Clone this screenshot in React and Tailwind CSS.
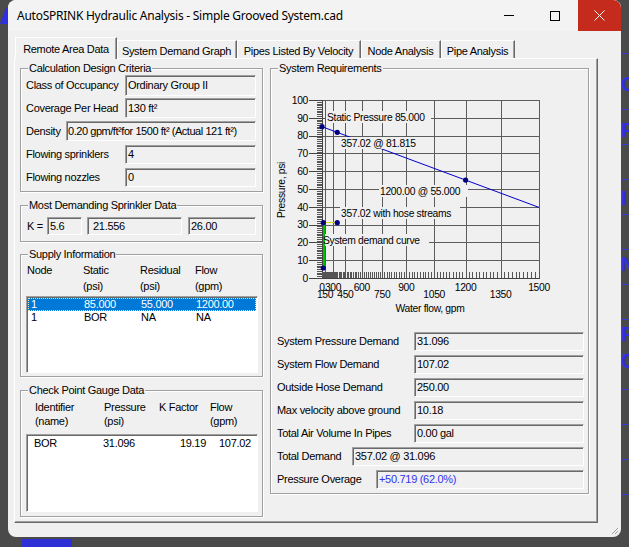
import React from "react";

const X = (q) => 322 + 217 * Math.pow(q / 1500, 1.85);
const Y = (p) => 278 - p * 1.78;
const c = (v) => Math.round(v) + 0.5;

function Group({ title, className, children }) {
  return (
    <div className={`relative border border-[#a0a0a0] shadow-[inset_1px_1px_0_#fff,1px_1px_0_#fff] ${className}`}>
      <span className="absolute left-[7px] top-[-7px] bg-[#f0f0f0] px-[1px] leading-[13px]">{title}</span>
      {children}
    </div>
  );
}

function Field({ className, children }) {
  return (
    <div
      className={`border border-t-[#a0a0a0] border-l-[#a0a0a0] border-r-white border-b-white shadow-[inset_1px_1px_0_#696969] bg-[#f0f0f0] whitespace-nowrap overflow-hidden ${className}`}
    >
      {children}
    </div>
  );
}

function Tab({ label, active, className }) {
  if (active) {
    return (
      <div className={`relative z-10 -mb-px flex h-[22px] items-start justify-center border-t border-l border-t-white border-l-white border-r border-r-[#696969] bg-[#f0f0f0] pt-[3px] shadow-[inset_-1px_0_0_#a0a0a0] ${className}`}>
        {label}
      </div>
    );
  }
  return (
    <div className={`flex h-[18px] items-start justify-center border-t border-t-white border-r border-r-[#696969] bg-[#f0f0f0] pt-[2px] shadow-[inset_-1px_0_0_#a0a0a0,inset_1px_0_0_#fff] ${className}`}>
      {label}
    </div>
  );
}

function Chart() {
  const grid = "#5c5c5c";
  const hl = [];
  for (let p = 10; p <= 100; p += 10) hl.push(p);
  const vl = [];
  for (let q = 150; q <= 1500; q += 150) vl.push(q);
  const minorY = [];
  for (let p = 0; p <= 100; p += 1) minorY.push(p);
  const minorX = [];
  for (let q = 0; q <= 1500; q += 15) minorX.push(q);
  const labels = [
    { t: "Static Pressure 85.000", x: 327, y: 121, rx: 326, ry: 111, w: 105 },
    { t: "357.02 @ 81.815", x: 341, y: 147, rx: 340, ry: 137, w: 84 },
    { t: "1200.00 @ 55.000", x: 380, y: 195, rx: 379, ry: 185, w: 89 },
    { t: "357.02 with hose streams", x: 341, y: 217, rx: 340, ry: 207, w: 120 },
    { t: "System demand curve", x: 323, y: 244, rx: 325, ry: 234, w: 104 },
  ];
  const pts = [
    [X(0), Y(85)],
    [X(357.02), Y(81.815)],
    [X(1200), Y(55)],
    [323.3, 268],
    [323.3, Y(31.096)],
    [X(357.02), Y(31.096)],
  ];
  return (
    <svg width="316" height="241" className="block font-['Liberation_Sans',Arial,sans-serif]">
      <g transform="translate(-271 -85)" shapeRendering="crispEdges">
        {hl.map((p) => (
          <line key={"h" + p} x1={322} x2={539} y1={c(Y(p))} y2={c(Y(p))} stroke={grid} />
        ))}
        {vl.map((q) => (
          <line key={"v" + q} x1={c(X(q))} x2={c(X(q))} y1={100} y2={278} stroke={grid} />
        ))}
        <line x1={322.5} x2={322.5} y1={100} y2={279} stroke="#444" />
        <line x1={322} x2={540} y1={278.5} y2={278.5} stroke="#444" />
        {minorY.map((p) => (
          <line key={"my" + p} x1={317} x2={322} y1={c(Y(p))} y2={c(Y(p))} stroke="#555" />
        ))}
        {hl.concat([0]).map((p) => (
          <line key={"My" + p} x1={309} x2={322} y1={c(Y(p))} y2={c(Y(p))} stroke="#444" />
        ))}
        {minorX.map((q) => (
          <line key={"mx" + q} x1={c(X(q))} x2={c(X(q))} y1={272} y2={278} stroke="#555" />
        ))}
        <rect x={323} y={223} width={2} height={45} fill="#00c000" />
        <rect x={324} y={222} width={14} height={1} fill="#d8d800" />
      </g>
      <g transform="translate(-271 -85)" fontSize="10.3" fill="#000">
        {[0, 10, 20, 30, 40, 50, 60, 70, 80, 90, 100].map((p) => (
          <text key={"yl" + p} x={308} y={Y(p) + 3.8} textAnchor="end">{p}</text>
        ))}
        {[0, 300, 600, 900, 1200, 1500].map((q) => (
          <text key={"xa" + q} x={X(q)} y={291} textAnchor="middle">{q}</text>
        ))}
        {[150, 450, 750, 1050, 1350].map((q) => (
          <text key={"xb" + q} x={X(q)} y={298} textAnchor="middle">{q}</text>
        ))}
        <text x={430} y={312} textAnchor="middle">Water flow, gpm</text>
        <text x={285} y={190} textAnchor="middle" transform="rotate(-90 285 190)">Pressure, psi</text>
        <line x1={X(0)} y1={Y(85)} x2={539} y2={Y(85 - 30 * Math.pow(1.25, 1.85))} stroke="#0000cc" />
        {labels.map((l) => (
          <g key={l.t}>
            <rect x={l.rx} y={l.ry} width={l.w} height={12} fill="#f0f0f0" />
            <text x={l.x} y={l.y}>{l.t}</text>
          </g>
        ))}
        {pts.map(([x, y], i) => (
          <circle key={i} cx={x} cy={y} r={2.6} fill="#00007f" />
        ))}
      </g>
    </svg>
  );
}

function ReqRow({ label, labelW, value, valueClass = "" }) {
  return (
    <div className="flex h-[19px] items-center">
      <span className={`shrink-0 ${labelW}`}>{label}</span>
      <Field className={`h-[19px] flex-1 pl-[2px] leading-[17px] ${valueClass}`}>{value}</Field>
    </div>
  );
}

export default function App() {
  const blueLines = [53, 109, 144, 179, 214, 249, 284, 319, 354, 389, 424, 459, 494];
  return (
    <div className="relative h-[547px] w-[629px] overflow-hidden bg-[#4a4a4a] pl-[8px] font-['Liberation_Sans',Arial,sans-serif] text-[11px] tracking-[-0.3px] text-black">
      {/* desktop drawing behind the window */}
      <svg className="absolute left-0 top-[6px]" width="8" height="20">
        <polygon points="0,18 6,2 8,2 8,18" fill="#2f2fe0" />
      </svg>
      <div className="absolute bottom-0 left-[22px] h-[8px] w-[50px] bg-[#2f2fd6]" />
      {blueLines.map((y) => (
        <div key={y} className="absolute left-[621px] h-px w-[8px] bg-[#3a3ae0]" style={{ top: y }} />
      ))}
      <div className="absolute left-[621px] top-[74px] flex flex-col text-[20px] font-bold leading-[20px] text-[#2f2fe0]">
        <span className="h-[46px]">C</span>
        <span className="h-[68px]">F</span>
        <span className="h-[66px]">I</span>
        <span className="h-[70px]">N</span>
        <span className="h-[27px]">F</span>
        <span>G</span>
      </div>

      {/* window */}
      <div className="relative flex h-[537px] w-[613px] flex-col overflow-hidden rounded-[8px] bg-[#f0f0f0]">
        <div className="flex h-[31px] shrink-0 items-center bg-[#f3f3f3]">
          <span className="flex-1 pl-[9px] font-['Noto_Sans',sans-serif] text-[12px] tracking-[-0.25px]">
            AutoSPRINK Hydraulic Analysis - Simple Grooved System.cad
          </span>
          <div className="flex h-[31px] w-[46px] items-center justify-center">
            <div className="h-px w-[10px] bg-black" />
          </div>
          <div className="flex h-[31px] w-[46px] items-center justify-center">
            <div className="h-[10px] w-[10px] border border-black" />
          </div>
          <div className="flex h-[31px] w-[43px] items-center justify-center bg-[#c42b1c]">
            <svg width="11" height="11" viewBox="0 0 11 11">
              <path d="M0.5 0.5 L10.5 10.5 M10.5 0.5 L0.5 10.5" stroke="#fff" strokeWidth="1" />
            </svg>
          </div>
        </div>

        <div className="pl-[6px] pt-[6px]">
          <div className="flex h-[21px] items-end pl-px">
            <Tab label="Remote Area Data" active className="w-[102px]" />
            <Tab label="System Demand Graph" className="w-[120px]" />
            <Tab label="Pipes Listed By Velocity" className="w-[124px]" />
            <Tab label="Node Analysis" className="w-[80px]" />
            <Tab label="Pipe Analysis" className="w-[74px]" />
          </div>

          <div className="flex h-[465px] w-[584px] gap-[7px] border border-t-white border-l-white border-r-[#696969] border-b-[#696969] pl-[5px] pt-[9px] shadow-[inset_-1px_-1px_0_#a0a0a0]">
            {/* left column */}
            <div className="flex w-[243px] flex-col">
              <Group title="Calculation Design Criteria" className="flex h-[124px] flex-col gap-[3px] pl-[5px] pr-[6px] pt-[6px]">
                <div className="flex h-[20px] items-center">
                  <span className="w-[99px] shrink-0">Class of Occupancy</span>
                  <Field className="h-[21px] flex-1 pl-[2px] leading-[19px]">Ordinary Group II</Field>
                </div>
                <div className="flex h-[20px] items-center">
                  <span className="w-[99px] shrink-0">Coverage Per Head</span>
                  <Field className="h-[20px] flex-1 pl-[2px] leading-[18px]">130 ft²</Field>
                </div>
                <div className="flex h-[20px] items-center">
                  <span className="w-[40px] shrink-0">Density</span>
                  <Field className="h-[20px] flex-1 pl-px leading-[18px] tracking-[-0.45px]">0.20 gpm/ft²for 1500 ft² (Actual 121 ft²)</Field>
                </div>
                <div className="flex h-[20px] items-center">
                  <span className="w-[99px] shrink-0">Flowing sprinklers</span>
                  <Field className="h-[19px] flex-1 pl-[2px] leading-[17px]">4</Field>
                </div>
                <div className="flex h-[20px] items-center">
                  <span className="w-[99px] shrink-0">Flowing nozzles</span>
                  <Field className="h-[19px] flex-1 pl-[2px] leading-[17px]">0</Field>
                </div>
              </Group>

              <Group title="Most Demanding Sprinkler Data" className="mt-[13px] flex h-[37px] items-start pl-[6px] pt-[11px]">
                <span className="w-[20px] shrink-0 leading-[18px]">K =</span>
                <Field className="h-[18px] w-[35px] pl-[2px] leading-[16px]">5.6</Field>
                <Field className="ml-[5px] h-[18px] w-[95px] pl-[5px] leading-[16px]">21.556</Field>
                <Field className="ml-[6px] h-[18px] w-[68px] pl-[2px] leading-[16px]">26.00</Field>
              </Group>

              <Group title="Supply Information" className="mt-[12px] flex h-[123px] flex-col pl-[5px] pt-[7px]">
                <div className="ml-px grid grid-cols-[56px_57px_55px_1fr] leading-[16px]">
                  <span>Node</span>
                  <span>Static<br />(psi)</span>
                  <span>Residual<br />(psi)</span>
                  <span>Flow<br />(gpm)</span>
                </div>
                <div className="mt-[2px] h-[77px] w-[232px] border border-t-[#a0a0a0] border-l-[#a0a0a0] border-r-white border-b-white bg-white pt-px shadow-[inset_1px_1px_0_#696969]">
                  <div className="mx-px grid h-[13px] grid-cols-[53px_57px_55px_1fr] bg-[#0078d7] pl-[3px] leading-[13px] text-white outline-1 outline-dotted outline-offset-[-1px] outline-[#f5e7a0]">
                    <span>1</span><span>85.000</span><span>55.000</span><span>1200.00</span>
                  </div>
                  <div className="mx-px grid h-[13px] grid-cols-[53px_57px_55px_1fr] pl-[3px] leading-[13px]">
                    <span>1</span><span>BOR</span><span>NA</span><span>NA</span>
                  </div>
                </div>
              </Group>

              <Group title="Check Point Gauge Data" className="mt-[13px] flex h-[127px] flex-col pl-[5px] pt-[9px]">
                <div className="ml-[9px] grid grid-cols-[69px_55px_51px_1fr] leading-[14px]">
                  <span>Identifier<br />(name)</span>
                  <span>Pressure<br />(psi)</span>
                  <span>K Factor</span>
                  <span>Flow<br />(gpm)</span>
                </div>
                <div className="mt-[6px] h-[78px] w-[232px] border border-t-[#a0a0a0] border-l-[#a0a0a0] border-r-white border-b-white bg-white pt-px shadow-[inset_1px_1px_0_#696969]">
                  <div className="grid grid-cols-[69px_64px_39px_1fr] pl-[7px] leading-[14px]">
                    <span>BOR</span><span>31.096</span><span className="text-right">19.19</span><span className="pl-[13px]">107.02</span>
                  </div>
                </div>
              </Group>
            </div>

            {/* right column */}
            <Group title="System Requirements" className="flex h-[426px] w-[319px] flex-col">
              <div className="mt-[16px]">
                <Chart />
              </div>
              <div className="mt-[6px] flex flex-col gap-[4px] pl-[6px] pr-[4px]">
                <ReqRow label="System Pressure Demand" labelW="w-[137px]" value="31.096" />
                <ReqRow label="System Flow Demand" labelW="w-[137px]" value="107.02" />
                <ReqRow label="Outside Hose Demand" labelW="w-[137px]" value="250.00" />
                <ReqRow label="Max velocity above ground" labelW="w-[137px]" value="10.18" />
                <ReqRow label="Total Air Volume In Pipes" labelW="w-[137px]" value="0.00 gal" />
                <ReqRow label="Total Demand" labelW="w-[75px]" value="357.02 @ 31.096" />
                <ReqRow label="Pressure Overage" labelW="w-[99px]" value="+50.719 (62.0%)" valueClass="text-[#3232f0]" />
              </div>
            </Group>
          </div>
        </div>

        <svg className="absolute bottom-[2px] right-[2px]" width="9" height="9">
          <path d="M8 2 L2 8 M8 5 L5 8" stroke="#a0a0a0" strokeWidth="1" />
        </svg>
      </div>
    </div>
  );
}
